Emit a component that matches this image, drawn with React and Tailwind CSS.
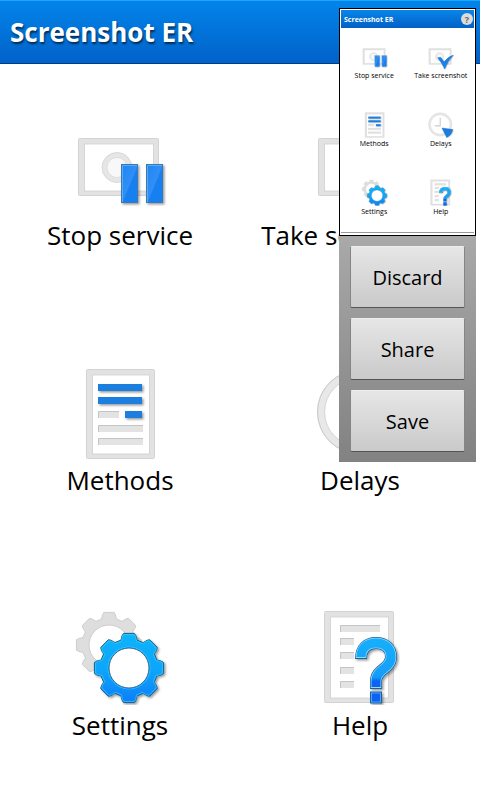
import React from 'react';

const gearPath = (cx, cy, outer, body, hole) => {
  const points = [];
  for (let i = 0; i < 8; i++) {
    const base = i * 45 - 90;
    [[-16, body], [-12, outer - 2], [-9, outer], [9, outer], [12, outer - 2], [16, body]].forEach(([offset, r]) => {
      const a = ((base + offset) * Math.PI) / 180;
      points.push(`${(cx + r * Math.cos(a)).toFixed(1)} ${(cy + r * Math.sin(a)).toFixed(1)}`);
    });
  }
  return `M${points.join('L')}Z M${cx - hole} ${cy}a${hole} ${hole} 0 1 0 ${hole * 2} 0a${hole} ${hole} 0 1 0 ${-hole * 2} 0Z`;
};

function Icon({ className, children }) {
  return (
    <svg viewBox="0 0 96 96" className={`shrink-0 ${className}`} aria-hidden="true">
      <defs>
        <linearGradient id="blue" x1="0" y1="0" x2="0" y2="1">
          <stop offset="0" stopColor="#11b4fb" />
          <stop offset="0.55" stopColor="#0ca4fc" />
          <stop offset="1" stopColor="#0a7dfa" />
        </linearGradient>
        <linearGradient id="bar" x1="0" y1="0" x2="1" y2="1">
          <stop offset="0" stopColor="#1d86f4" />
          <stop offset="0.5" stopColor="#318ff5" />
          <stop offset="0.55" stopColor="#1a7ff0" />
          <stop offset="1" stopColor="#1480f4" />
        </linearGradient>
        <linearGradient id="mark" gradientUnits="userSpaceOnUse" x1="0" y1="28" x2="0" y2="95">
          <stop offset="0" stopColor="#18b0fb" />
          <stop offset="0.6" stopColor="#119cfa" />
          <stop offset="0.66" stopColor="#0a62f2" />
          <stop offset="1" stopColor="#0a62f2" />
        </linearGradient>
        <filter id="shade" x="-20%" y="-20%" width="150%" height="150%">
          <feDropShadow dx="1.5" dy="1.5" stdDeviation="1" floodColor="#000" floodOpacity="0.4" />
        </filter>
      </defs>
      {children}
    </svg>
  );
}

function Frame({ x, y, w, h }) {
  return (
    <>
      <rect x={x + 0.5} y={y + 0.5} width={w - 1} height={h - 1} rx="1" fill="#e3e2e2" stroke="#d3d3d3" />
      <rect x={x + 6.5} y={y + 6} width={w - 12} height={h - 11} fill="#fff" stroke="#cfcfcf" strokeWidth="0.8" />
    </>
  );
}

function Camera() {
  return (
    <>
      <Frame x={6} y={19} w={81} h={58} />
      <circle cx="45" cy="48.5" r="12.5" fill="none" stroke="#e6e6e6" strokeWidth="5" />
      <circle cx="45" cy="48.5" r="15" fill="none" stroke="#d2d2d2" strokeWidth="0.8" />
      <circle cx="45" cy="48.5" r="10" fill="#f8f8f8" stroke="#d8d8d8" strokeWidth="0.8" />
    </>
  );
}

function Slot({ x, y, w }) {
  return (
    <>
      <rect x={x} y={y} width={w} height="7" fill="#e4e3e3" />
      <path d={`M${x + 0.5} ${y + 7}V${y + 0.5}H${x + w}`} fill="none" stroke="#c4c4c4" />
    </>
  );
}

const drawings = {
  stop: (
    <>
      <Camera />
      <g filter="url(#shade)" stroke="#3a78b4">
        <rect x="49.5" y="45.5" width="16" height="38" fill="url(#bar)" />
        <rect x="74.5" y="45.5" width="16" height="38" fill="url(#bar)" />
      </g>
      <path d="M50.5 83V46.5H65M75.5 83V46.5H90" fill="none" stroke="#62b4f8" strokeWidth="0.8" />
    </>
  ),
  take: (
    <>
      <Camera />
      <path d="M38 52L48 51L61 67Q74 49 94 43Q74 63 63 92Q52 69 38 52Z" fill="#1a82e6" stroke="#1668bd" filter="url(#shade)" />
    </>
  ),
  methods: (
    <>
      <Frame x={14} y={5} w={69} h={90} />
      <g fill="#1c7fe0" filter="url(#shade)">
        <rect x="26" y="20" width="44" height="7" />
        <rect x="26" y="33" width="44" height="7" />
        <rect x="53" y="47" width="17" height="7" />
      </g>
      <Slot x={26} y={47} w={21} />
      <Slot x={26} y={61} w={45} />
      <Slot x={26} y={74} w={45} />
    </>
  ),
  delays: (
    <>
      <circle cx="47" cy="48" r="38" fill="#fff" stroke="#e8e8e8" strokeWidth="8" />
      <circle cx="47" cy="48" r="41.5" fill="none" stroke="#c8c8c8" />
      <circle cx="47" cy="48" r="34.5" fill="none" stroke="#d8d8d8" />
      <path d="M47 24V53H28" fill="none" stroke="#cccccc" strokeWidth="4" />
      <path d="M53 60L92 66Q88 86 70 94Z" fill="#1c7ce4" stroke="#1769c2" filter="url(#shade)" />
    </>
  ),
  settings: (
    <>
      <path d={gearPath(37, 36, 33, 27, 20)} fill="#dedede" stroke="#cdcdcd" fillRule="evenodd" />
      <g filter="url(#shade)">
        <path d={gearPath(57, 59, 35, 29, 20)} fill="url(#blue)" stroke="#17618f" fillRule="evenodd" />
      </g>
      <path d={gearPath(57, 59, 33.8, 27.9, 21)} fill="none" stroke="#3fd0f8" strokeWidth="0.7" />
      <circle cx="57" cy="59" r="20" fill="#fff" stroke="#2b6fa5" />
    </>
  ),
  help: (
    <>
      <Frame x={12} y={2} w={70} h={92} />
      <Slot x={28} y={16} w={40} />
      <Slot x={28} y={29} w={14} />
      <Slot x={28} y={43} w={14} />
      <Slot x={28} y={58} w={14} />
      <Slot x={28} y={72} w={14} />
      <g fill="none" filter="url(#shade)">
        <path d="M49 50C49 39 55 34 64 34C73 34 79 39 79 48C79 60 64 60 64 72V80" stroke="#1c6299" strokeWidth="12" />
        <path d="M49 49C49 39 55 34 64 34C73 34 79 39 79 48C79 60 64 60 64 72V79" stroke="#8edcff" strokeWidth="10.5" />
        <path d="M49 48C49 39 55 34 64 34C73 34 79 39 79 48C79 60 64 60 64 72V78" stroke="url(#mark)" strokeWidth="9" />
        <rect x="58.5" y="83" width="11" height="11" fill="#0a62f2" stroke="#1c6299" />
        <rect x="59.5" y="84" width="9" height="9" stroke="#66b5ff" strokeWidth="0.8" />
      </g>
    </>
  ),
};

const items = [
  { id: 'stop', label: 'Stop service' },
  { id: 'take', label: 'Take screenshot' },
  { id: 'methods', label: 'Methods' },
  { id: 'delays', label: 'Delays' },
  { id: 'settings', label: 'Settings' },
  { id: 'help', label: 'Help' },
];

function Preview() {
  return (
    <div className="border border-black bg-white px-px pt-px">
      <div className="flex h-[18px] items-center justify-between bg-linear-to-b from-[#0a86ea] to-[#0460c6] pr-px pl-[3px]">
        <span className="text-[7px] leading-none font-bold text-white">Screenshot ER</span>
        <span className="flex size-3 items-center justify-center rounded-full bg-[#dcdcdc] text-[9px] leading-none font-bold text-[#666]">?</span>
      </div>
      <div className="grid grid-cols-2">
        {items.map((item) => (
          <div key={item.id} className="flex h-[68px] flex-col items-center justify-center">
            <Icon className="size-[27px]">{drawings[item.id]}</Icon>
            <span className="text-[7px] leading-[12px] whitespace-nowrap">{item.label}</span>
          </div>
        ))}
      </div>
      <div className="h-[3px] border-t border-[#999]" />
    </div>
  );
}

function SharePanel() {
  return (
    <aside className="absolute top-2 right-1 w-[137px]">
      <Preview />
      <div className="flex flex-col gap-[10px] bg-linear-to-b from-[#a9a9a9] to-[#828282] px-[11px] py-[10px]">
        {['Discard', 'Share', 'Save'].map((label) => (
          <button
            key={label}
            type="button"
            className="h-[62px] rounded-xs border border-[#858585] border-t-[#eeeeee] border-b-[#555555] bg-linear-to-b from-[#e6e6e6] to-[#cacaca] pt-0.5 text-[20px] text-black"
          >
            {label}
          </button>
        ))}
      </div>
    </aside>
  );
}

export default function App() {
  return (
    <div className="relative flex min-h-screen flex-col bg-white font-['Open_Sans','Noto_Sans',sans-serif] text-black">
      <header className="flex h-16 items-center border-t border-b border-t-[#18a8fb] border-b-[#033c86] bg-linear-to-b from-[#0384ea] to-[#0262c9] px-[10px]">
        <h1 className="text-[26px] font-bold text-white [text-shadow:1px_2px_2px_rgba(0,0,0,0.6)]">Screenshot ER</h1>
      </header>
      <main className="grid flex-1 grid-cols-2 grid-rows-3">
        {items.map((item) => (
          <button key={item.id} type="button" className="flex flex-col items-center justify-center gap-1 pb-1">
            <Icon className="size-24">{drawings[item.id]}</Icon>
            <span className="text-[26px] leading-8 whitespace-nowrap">{item.label}</span>
          </button>
        ))}
      </main>
      <SharePanel />
    </div>
  );
}
